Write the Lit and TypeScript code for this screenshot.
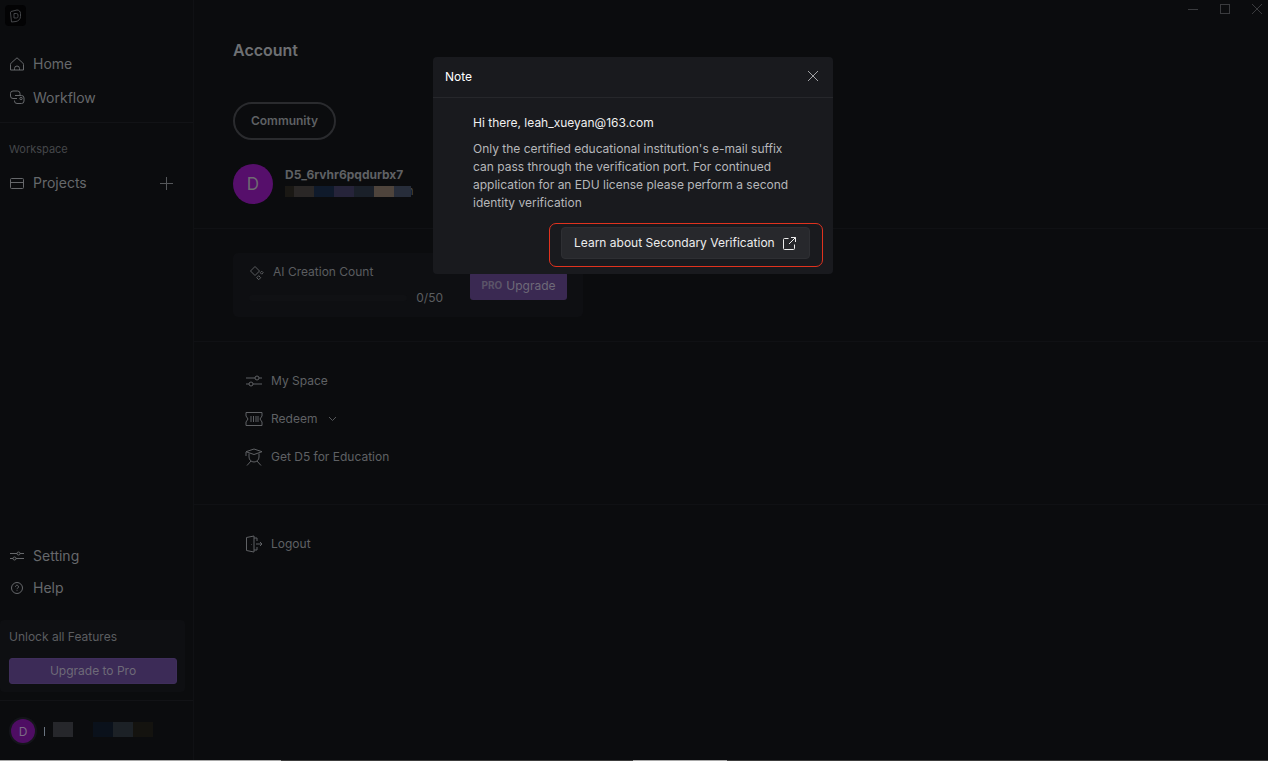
import { LitElement, html, css, svg } from "lit";
import { customElement } from "lit/decorators.js";

const line = (d: unknown, size = 18) => html`<svg class="ico" width=${size} height=${size} viewBox="0 0 ${size} ${size}" fill="none" stroke="currentColor" stroke-width="1">${d}</svg>`;

const icons = {
  home: svg`<path d="M8 1.800 2.200 7c-.5.5-.7.9-.7 1.500v5.500h13V8.500c0-.6-.2-1-.7-1.500L8 1.800Z"/><path d="M5.500 14v-1.500a2.500 2.500 0 0 1 5 0V14"/>`,
  workflow: svg`<path d="M8 8.500H4A2.500 2.500 0 0 1 1.500 6V3.500A2.500 2.500 0 0 1 4 1h4.500A2.500 2.500 0 0 1 11 3.500V5"/><path d="M6 5.500h6.500A2.500 2.500 0 0 1 15 8v3a2.500 2.500 0 0 1-2.500 2.500H8A2.500 2.500 0 0 1 5.500 11v-.5"/><circle cx="12" cy="8.500" r="1.200"/>`,
  projects: svg`<rect x="1.500" y="3.500" width="13" height="10" rx="1"/><path d="M1.500 7.500h13"/>`,
  setting: svg`<path d="M1 5.500h7M11 5.500h4M1 10.500h3M7 10.500h8"/><circle cx="9.500" cy="5.500" r="1.500"/><circle cx="5.500" cy="10.500" r="1.500"/>`,
  help: svg`<circle cx="8" cy="8" r="5.500"/><path d="M6.500 6.700a1.500 1.500 0 1 1 2.300 1.300c-.5.300-.8.600-.8 1.200"/><path d="M8 10.300v.8"/>`,
  sliders: svg`<path d="M1 6h9M14 6h3M1 12h3M8 12h9"/><circle cx="12" cy="6" r="2"/><circle cx="6" cy="12" r="2"/>`,
  sparkle: svg`<path d="M6 3.500 10.500 8 6 12.500 1.500 8 6 3.500Z"/><path d="m12.700 8.200 1.500 1.500-1.500 1.500-1.500-1.500 1.500-1.500Z"/><path d="m9.700 12.700 2 2-2 2-2-2 2-2Z"/>`,
  ticket: svg`<path d="M1 2.500h16v3.500l-2 3 2 3v3.500H1V12l2-3-2-3V2.500Z"/><path d="M6 6v6M8.500 6v6M11 6v6M13 6v6"/>`,
  edu: svg`<path d="m9 1 8 2.700-8 2.800-8-2.800L9 1Z"/><path d="M4 5.500v3.500a5 5 0 0 0 10 0V5.500"/><path d="m6 13-4 4.500M12 13l4 4.500M1 4v4"/>`,
  logout: svg`<path d="M9 17 1.500 15.500V2.500L9 1v16Z"/><path d="M9 3h3v3M9 15h3v-3M11 9h6M15 7l2 2-2 2"/><path d="M6.500 9v.500"/>`,
};

@customElement("app-root")
export class AppRoot extends LitElement {
  static styles = css`
    :host {
      display: block;
      width: 1268px;
      height: 761px;
      position: relative;
      overflow: hidden;
      background: #0b0c0e;
      color: #6e7073;
      font-family: Inter, "Liberation Sans", sans-serif;
    }
    .ico { display: block; flex: none; }
    .shell { display: flex; height: 760px; }
    .strip { display: flex; height: 1px; background: #3c3c3c; }
    .strip i { display: block; height: 1px; background: #a8a8a8; }

    .side {
      width: 194px;
      flex: none;
      border-right: 1px solid #101114;
      display: flex;
      flex-direction: column;
      box-sizing: border-box;
      height: 760px;
    }
    .logo {
      width: 21px;
      height: 21px;
      margin: 5px 0 0 5px;
      border-radius: 4px;
      background: #030304;
      color: #45474a;
      display: flex;
      align-items: center;
      justify-content: center;
    }
    .nav-top { box-sizing: border-box; padding-top: 20px; border-bottom: 1px solid #121316; height: 97px; }
    .nav-item {
      display: flex;
      align-items: center;
      gap: 8px;
      height: 34px;
      padding-left: 9px;
      font-size: 14px;
      line-height: 17px;
      color: #66686b;
    }
    .nav-item .ico { margin-top: 2px; }
    .section { font-size: 11px; color: #45474a; padding: 20px 0 0 9px; line-height: 13px; }
    .projects { margin-top: 9px; }
    .plus { margin: 2px 20px 0 auto; color: #55575a; }
    .spacer { flex: 1; }
    .nav-bottom .nav-item { height: 32px; }
    .unlock {
      margin: 17px 8px 8px 0;
      height: 72px;
      box-sizing: border-box;
      background: #0e0f12;
      border-radius: 4px;
      padding: 9px 0 0 9px;
      font-size: 12px;
      line-height: 15px;
      color: #5b5d60;
    }
    .upgrade-wide {
      margin-top: 14px;
      width: 168px;
      height: 26px;
      box-sizing: border-box;
      padding-bottom: 2px;
      border: 1px solid #3f2e5b;
      background: #3c2b57;
      border-radius: 3px;
      color: #6e6a78;
      display: flex;
      align-items: center;
      justify-content: center;
      font-size: 12px;
    }
    .me {
      height: 60px;
      flex: none;
      box-sizing: border-box;
      border-top: 1px solid #121316;
      display: flex;
      align-items: center;
      padding: 1px 0 0 11px;
    }
    .avatar-s {
      width: 24px;
      height: 24px;
      border-radius: 50%;
      background: #4e0d63;
      box-shadow: 0 0 0 2px #14151a;
      color: #7b6a85;
      font-size: 12px;
      display: flex;
      align-items: center;
      justify-content: center;
      flex: none;
    }
    .cursor { width: 1px; height: 9px; background: #6a7480; margin: 0 8px 0 9px; }
    .blur { display: flex; height: 15px; }
    .blur i { display: block; height: 100%; }
    .me .blur { margin-bottom: 3px; }

    .main { flex: 1; min-width: 0; }
    .block { padding-left: 39px; border-bottom: 1px solid #101114; box-sizing: border-box; }
    .account { height: 229px; padding-top: 41px; }
    h1 { margin: 0; font-size: 16px; line-height: 19px; font-weight: 600; color: #6e7073; }
    .pill {
      margin-top: 42px;
      width: 103px;
      height: 38px;
      box-sizing: border-box;
      border: 2px solid #2a2b2e;
      border-radius: 19px;
      display: flex;
      align-items: center;
      justify-content: center;
      padding-bottom: 2px;
      font-size: 12px;
      font-weight: 600;
      color: #5f6164;
    }
    .user { margin-top: 24px; display: flex; gap: 12px; align-items: flex-start; }
    .avatar {
      width: 40px;
      height: 40px;
      border-radius: 50%;
      background: #560f6b;
      color: #6f6a72;
      font-size: 17px;
      display: flex;
      align-items: center;
      justify-content: center;
    }
    .user b { display: block; margin-top: 3px; font-size: 12px; line-height: 15px; font-weight: 700; color: #5f6164; }
    .email { margin-top: 4px; display: flex; align-items: flex-end; height: 11px; }
    .email .blur { height: 11px; position: relative; z-index: 1; }
    .tail { margin-left: -4px; font-size: 11px; line-height: 11px; color: #4a4c4f; }

    .usage { height: 113px; padding-top: 24px; }
    .card {
      width: 350px;
      height: 64px;
      box-sizing: border-box;
      background: #0e0f12;
      border-radius: 5px;
      padding: 8px 16px 0 16px;
      display: flex;
      justify-content: space-between;
    }
    .count-title { display: flex; align-items: center; gap: 6px; font-size: 12px; line-height: 17px; color: #5b5d60; }
    .count-title .ico { margin-top: 2px; }
    .count-side { width: 194px; }
    .count-row { display: flex; align-items: center; gap: 9px; margin-top: 9px; font-size: 12px; line-height: 15px; color: #5b5d60; }
    .track { flex: 1; height: 6px; border-radius: 3px; background: #101114; }
    .up-btn {
      margin-top: 11px;
      width: 97px;
      height: 28px;
      box-sizing: border-box;
      padding-bottom: 2px;
      background: #3a2952;
      border-radius: 3px;
      display: flex;
      align-items: center;
      justify-content: center;
      gap: 4px;
      font-size: 12px;
      color: #6e6a78;
    }
    .up-btn small { font-size: 10px; font-weight: 700; color: #5b5468; }

    .links { height: 163px; padding: 19px 0 0 51px; }
    .link {
      display: flex;
      align-items: center;
      gap: 8px;
      height: 38px;
      font-size: 12px;
      color: #5f6164;
    }
    .link .ico { margin-top: 2px; }
    .chev { margin: 2px 0 0 3px; color: #55575a; }
    .logout { padding: 19px 0 0 51px; }

    .win {
      position: absolute;
      top: 4px;
      right: 6px;
      display: flex;
      gap: 22px;
      color: #3a3b3e;
    }
    .win span { width: 10px; height: 10px; display: flex; align-items: center; justify-content: center; }

    .modal {
      position: absolute;
      left: 433px;
      top: 57px;
      width: 400px;
      height: 217px;
      background: #191a1e;
      border-radius: 4px;
      color: #fff;
      display: flex;
      flex-direction: column;
    }
    .modal header {
      height: 41px;
      box-sizing: border-box;
      flex: none;
      border-bottom: 1px solid #26272b;
      display: flex;
      align-items: center;
      justify-content: space-between;
      padding: 0 12px 2px;
      font-size: 12px;
    }
    .modal header svg { color: #a0a1a4; }
    .body { padding: 16px 28px 0 40px; font-size: 12px; line-height: 18px; }
    .hi { color: #f0f0f0; }
    .msg { margin: 8px 0 0; color: #b6b7ba; }
    .cta-wrap { display: flex; justify-content: flex-end; padding-right: 23px; margin-top: 15px; }
    .cta {
      width: 249px;
      height: 32px;
      box-sizing: border-box;
      background: #27282c;
      border: 1px solid #2e2f33;
      border-radius: 4px;
      display: flex;
      align-items: center;
      gap: 8px;
      padding: 0 0 2px 12px;
      font-size: 12px;
      color: #ededed;
    }
    .cta svg { margin-top: 2px; }
    .mark {
      position: absolute;
      left: 116px;
      top: 166px;
      width: 274px;
      height: 44px;
      box-sizing: border-box;
      border: 1px solid #e0321e;
      border-radius: 7px;
    }
  `;

  private blur(cells: [string, number][]) {
    return html`<div class="blur">${cells.map(([c, w]) => html`<i style="background:${c};width:${w}px"></i>`)}</div>`;
  }

  render() {
    return html`
      <div class="shell">
        <aside class="side">
          <div class="logo">
            <svg width="13" height="14" viewBox="0 0 13 14" fill="none" stroke="currentColor"><path d="M2 2.500 8 1c2 0 3.500 1.500 3.500 3.500v3C11.500 10 9.500 12 7 12.500L2.500 13 1.500 4c0-.7 0-1.300.500-1.500Z"/><path d="M5 4.500h2.500A1.500 1.500 0 0 1 9 6v1.500A1.500 1.500 0 0 1 7.500 9H5V4.500Z"/></svg>
          </div>
          <div class="nav-top">
            <div class="nav-item">${line(icons.home, 16)}Home</div>
            <div class="nav-item">${line(icons.workflow, 16)}Workflow</div>
          </div>
          <div class="section">Workspace</div>
          <div class="nav-item projects">
            ${line(icons.projects, 16)}Projects
            <svg class="plus" width="13" height="13" viewBox="0 0 13 13" stroke="currentColor"><path d="M6.500 0v13M0 6.500h13"/></svg>
          </div>
          <div class="spacer"></div>
          <div class="nav-bottom">
            <div class="nav-item">${line(icons.setting, 16)}Setting</div>
            <div class="nav-item">${line(icons.help, 16)}Help</div>
          </div>
          <div class="unlock">
            Unlock all Features
            <div class="upgrade-wide">Upgrade to Pro</div>
          </div>
          <div class="me">
            <div class="avatar-s">D</div>
            <span class="cursor"></span>
            ${this.blur([["#26272b", 20], ["#0b0c0e", 20], ["#0a111b", 20], ["#1c2126", 20], ["#14130f", 20]])}
          </div>
        </aside>
        <main class="main">
          <section class="block account">
            <h1>Account</h1>
            <div class="pill">Community</div>
            <div class="user">
              <div class="avatar">D</div>
              <div>
                <b>D5_6rvhr6pqdurbx7</b>
                <div class="email">
                  ${this.blur([["#1a1814", 9], ["#2a2726", 20], ["#0f1a2b", 20], ["#26243a", 20], ["#1a2029", 20], ["#4e443c", 20], ["#272d3a", 17]])}
                  <span class="tail">h</span>
                </div>
              </div>
            </div>
          </section>
          <section class="block usage">
            <div class="card">
              <div class="count-side">
                <div class="count-title">${line(icons.sparkle, 18)}AI Creation Count</div>
                <div class="count-row"><span class="track"></span>0/50</div>
              </div>
              <div class="up-btn"><small>PRO</small>Upgrade</div>
            </div>
          </section>
          <section class="block links">
            <div class="link">${line(icons.sliders)}My Space</div>
            <div class="link">${line(icons.ticket)}Redeem
              <svg class="chev" width="9" height="6" viewBox="0 0 9 6" fill="none" stroke="currentColor"><path d="m1 1 3.500 3.500L8 1"/></svg>
            </div>
            <div class="link">${line(icons.edu)}Get D5 for Education</div>
          </section>
          <section class="logout">
            <div class="link">${line(icons.logout)}Logout</div>
          </section>
        </main>
      </div>
      <div class="strip"><i style="width:281px"></i><i style="width:94px;margin-left:352px"></i></div>

      <div class="win">
        <span><svg width="10" height="1"><path d="M0 .5h10" stroke="currentColor"/></svg></span>
        <span><svg width="10" height="10" fill="none"><rect x=".5" y=".5" width="9" height="9" stroke="currentColor"/></svg></span>
        <span><svg width="10" height="10" fill="none" stroke="currentColor"><path d="m0 0 10 10M10 0 0 10"/></svg></span>
      </div>

      <div class="modal">
        <header>
          Note
          <svg width="16" height="16" viewBox="0 0 16 16" fill="none" stroke="currentColor"><path d="m3 3 10 10M13 3 3 13"/></svg>
        </header>
        <div class="body">
          <div class="hi">Hi there, leah_xueyan@163.com</div>
          <p class="msg">Only the certified educational institution's e-mail suffix can pass through the verification port. For continued application for an EDU license please perform a second identity verification</p>
        </div>
        <div class="cta-wrap">
          <div class="cta">
            Learn about Secondary Verification
            <svg width="13" height="13" viewBox="0 0 13 13" fill="none" stroke="currentColor"><path d="M5.500 1.500h-4a1 1 0 0 0-1 1v9a1 1 0 0 0 1 1h9a1 1 0 0 0 1-1v-4M8 .5h4.500V5M12.500.5 6 7"/></svg>
          </div>
        </div>
        <div class="mark"></div>
      </div>
    `;
  }
}
